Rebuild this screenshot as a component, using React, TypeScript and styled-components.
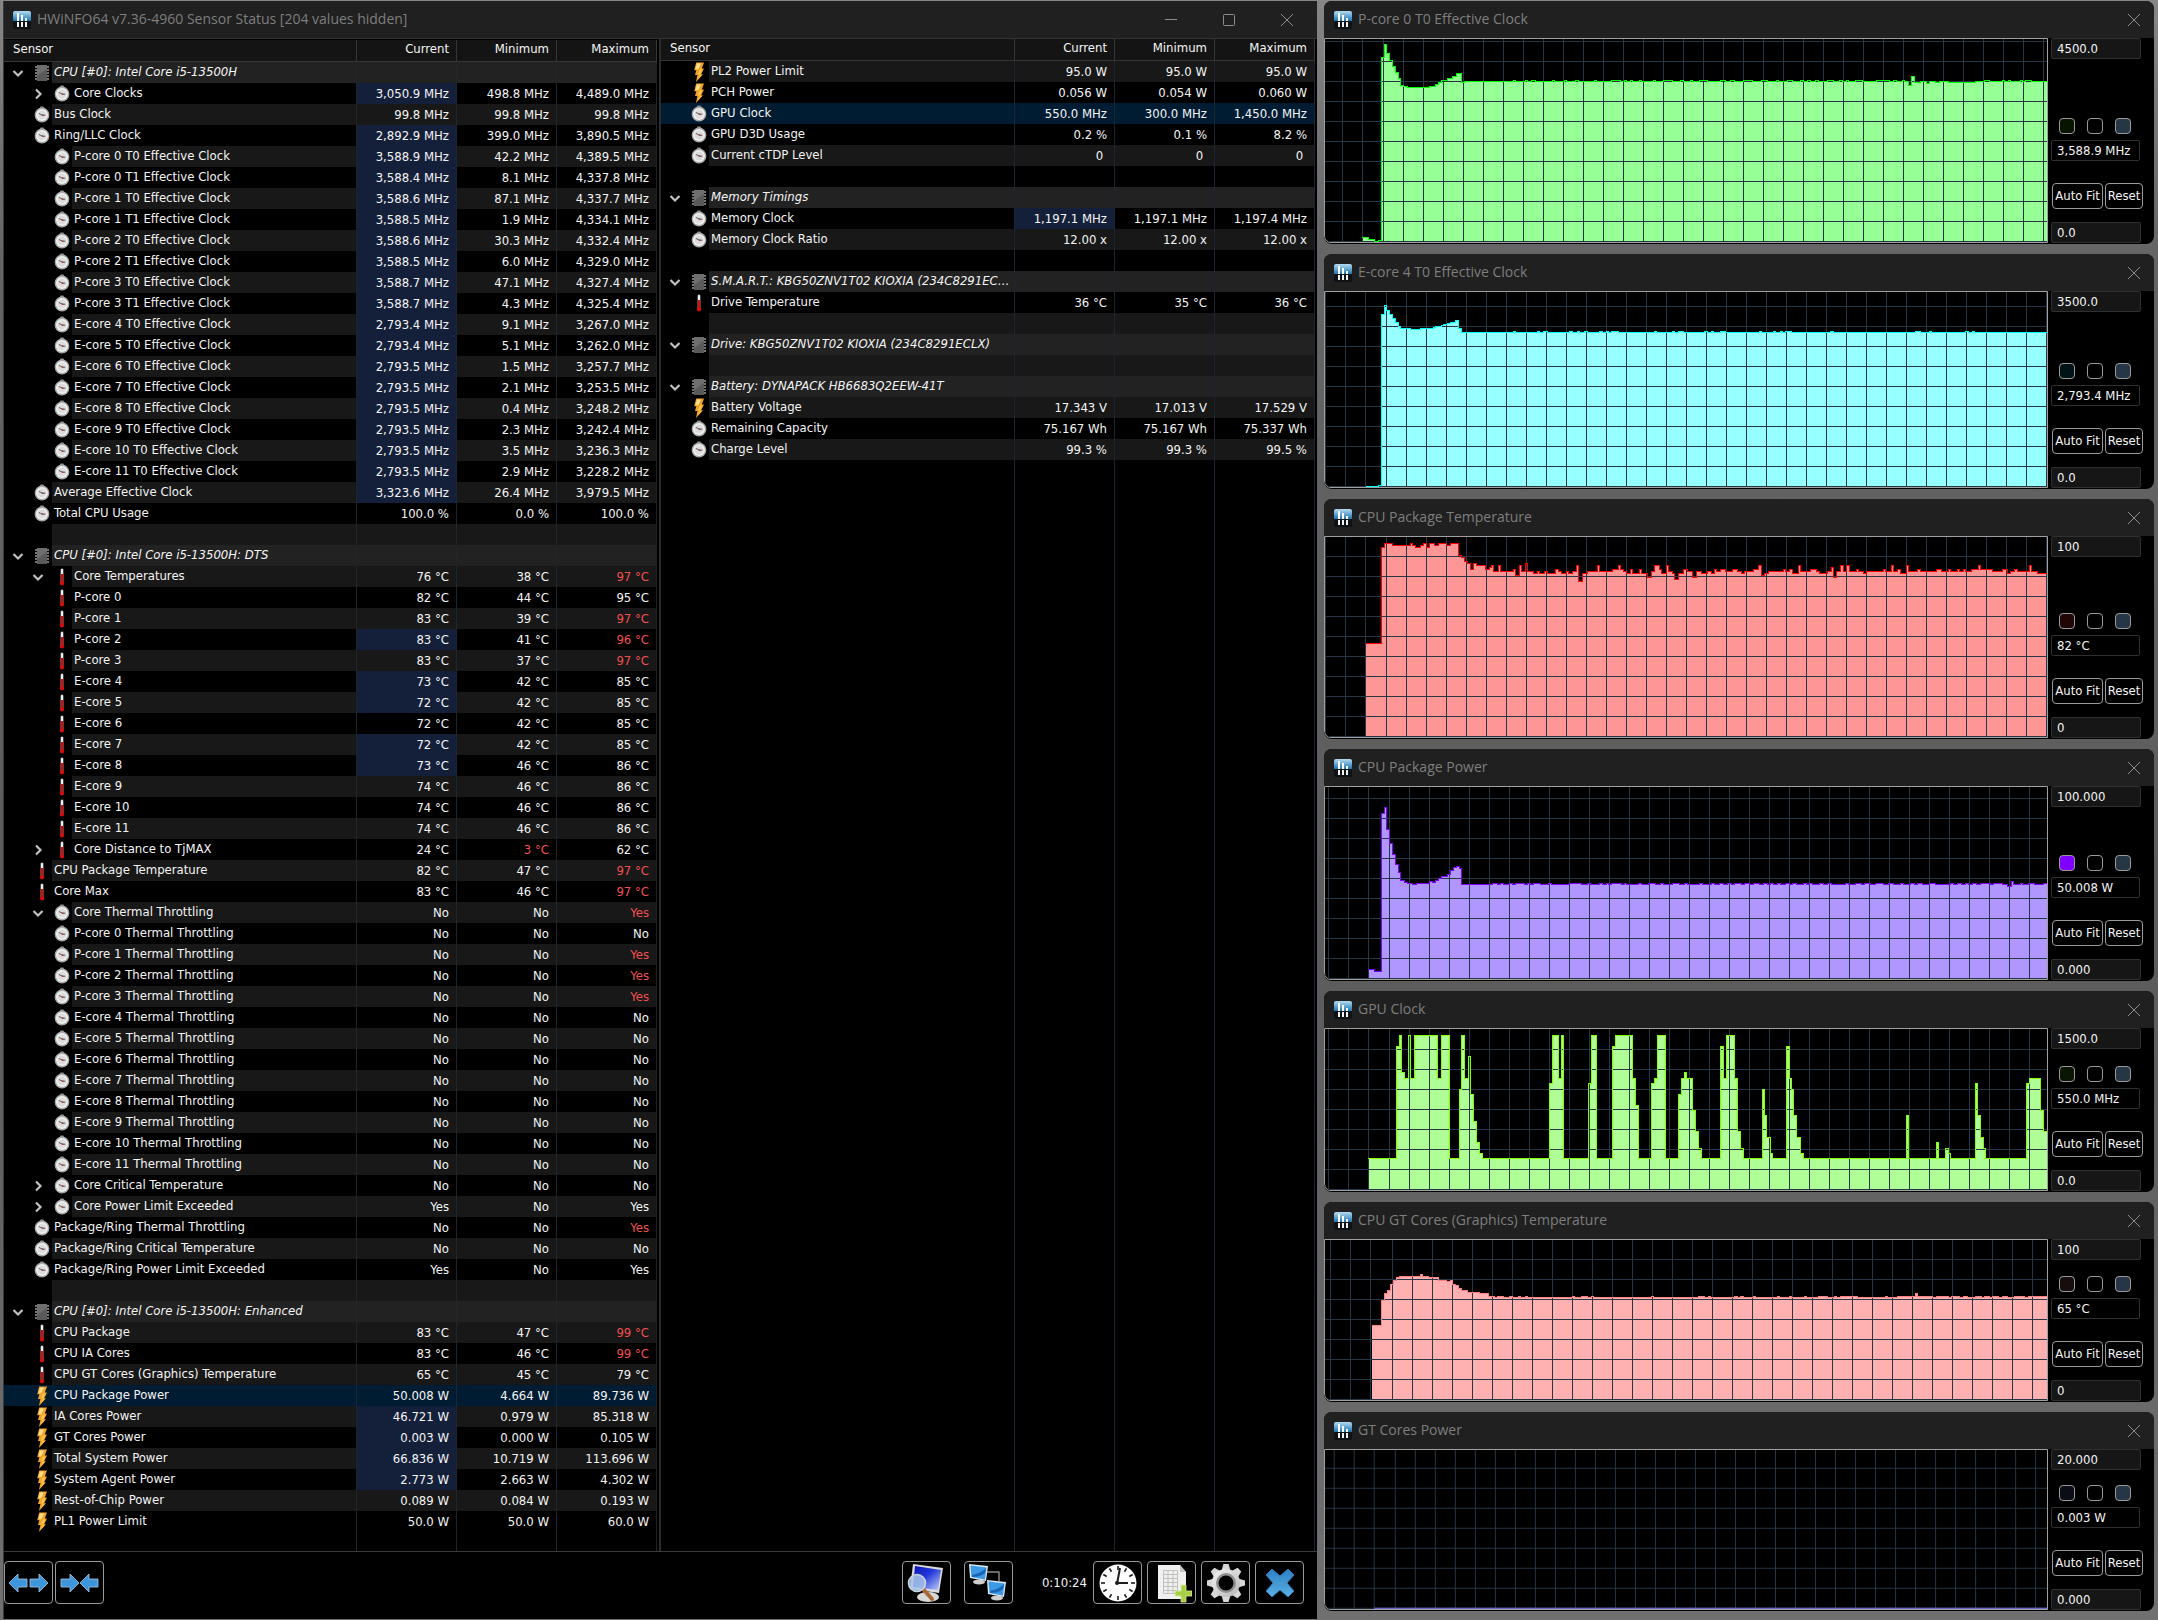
import React, { useState } from "react";
import styled, { createGlobalStyle, css } from "styled-components";

/* ---------- theme ---------- */

const tableFont = `"DejaVu Sans Condensed", "DejaVu Sans", "Noto Sans", sans-serif`;
const titleFont = `"Open Sans", "Noto Sans", sans-serif`;

const GlobalStyle = createGlobalStyle`
  *, *::before, *::after { box-sizing: border-box; }
  html, body { margin: 0; padding: 0; background: #5f5f5f; }
  body { font-family: ${tableFont}; font-size: 13px; line-height: 20px; color: #f4f4f4; }
  button, input { font: inherit; color: inherit; margin: 0; }
`;

/* ---------- layout ---------- */

const Desktop = styled.div`
  display: grid;
  grid-template-columns: minmax(0, 1314fr) minmax(0, 830fr);
  column-gap: 7px;
  align-items: start;
  min-height: 100vh;
  padding: 1px 4px 1px 3px;
  background: linear-gradient(#868686, #646464 260px, #5c5c5c 60%, #707070);
`;

const MainWindow = styled.main`
  display: flex;
  flex-direction: column;
  min-height: calc(100vh - 2px);
  border-left: 1px solid #3a3a3a;
  background: #000;
`;

const GraphColumn = styled.section`
  display: flex;
  flex-direction: column;
  gap: 10px;
`;

const TitleBar = styled.header<{ $main?: boolean }>`
  display: flex;
  align-items: center;
  height: 37px;
  padding: ${(p) => (p.$main ? "0 20px 0 9px" : "0 10px 0 10px")};
  background: #202020;
`;

const Title = styled.h1`
  flex: 1;
  min-width: 0;
  margin: 0 0 2px 6px;
  overflow: hidden;
  white-space: nowrap;
  color: #7e7e7e;
  font-family: ${titleFont};
  font-size: 14px;
  font-weight: 400;
  line-height: 20px;
`;

const WindowControls = styled.div`
  display: flex;
  gap: 38px;
`;

const ControlButton = styled.button`
  display: grid;
  place-items: center;
  width: 20px;
  height: 20px;
  padding: 0;
  border: 0;
  background: none;
  color: #8c8c8c;
`;

const Panes = styled.div`
  display: grid;
  flex: 1;
  grid-template-columns: minmax(0, 657fr) minmax(0, 656fr);
  border-top: 1px solid #343434;
`;

const Pane = styled.section<{ $divided?: boolean }>`
  display: grid;
  ${(p) =>
    p.$divided
      ? css`
          padding: 1px 2px 0 0;
          border-right: 2px solid #2c2c2c;
        `
      : css`
          padding-right: 2px;
        `}
`;

/* ---------- sensor table ---------- */

const Table = styled.table`
  width: 100%;
  height: 100%;
  table-layout: fixed;
  border-collapse: separate;
  border-spacing: 0;
`;

const ValueCol = styled.col`
  width: 100px;
`;

const HeadCell = styled.th<{ $name?: boolean }>`
  height: 22px;
  padding: ${(p) => (p.$name ? "0 0 3px 9px" : "0 7px 3px 0")};
  border-right: 1px solid #363636;
  border-bottom: 1px solid #363636;
  background: #141414;
  font-weight: 400;
  line-height: 18px;
  text-align: ${(p) => (p.$name ? "left" : "right")};
`;

type Tone = "plain" | "stripe" | "group" | "selected";

const toneColor: Record<Tone, string> = {
  plain: "#000",
  stripe: "#181818",
  group: "#222",
  selected: "#001c33",
};

const Row = styled.tr<{ $tone: Tone }>`
  height: 21px;
  background: ${(p) => toneColor[p.$tone]};
`;

const NameCell = styled.td`
  padding: 0;
  border-right: 1px solid #1c2630;
`;

const NameLine = styled.div`
  display: flex;
  height: 21px;
`;

const Gutter = styled.span<{ $depth: number; $selected: boolean }>`
  display: flex;
  flex: none;
  align-items: center;
  justify-content: flex-end;
  gap: 6px;
  width: ${(p) => 48 + p.$depth * 20}px;
  background: ${(p) => (p.$selected ? "transparent" : "#000")};
`;

const Expander = styled.button`
  display: grid;
  place-items: center;
  width: 16px;
  height: 20px;
  padding: 0;
  border: 0;
  background: none;
`;

const IconSlot = styled.span`
  display: grid;
  place-items: center;
  width: 20px;
  height: 21px;
`;

const Label = styled.span<{ $group: boolean }>`
  flex: 1;
  min-width: 0;
  padding-left: 2px;
  overflow: hidden;
  white-space: nowrap;
  text-overflow: ellipsis;
  font-style: ${(p) => (p.$group ? "italic" : "normal")};
`;

const ValueCell = styled.td<{ $changed?: boolean; $alert?: boolean }>`
  padding: 0 7px 0 0;
  border-right: 1px solid #1c2630;
  text-align: right;
  white-space: pre;
  ${(p) => p.$changed && "background: #14203a;"}
  ${(p) => p.$alert && "color: #f25050;"}
`;

const FillerRow = styled.tr`
  background: #000;
`;

/* ---------- toolbar ---------- */

const Toolbar = styled.footer`
  display: flex;
  align-items: center;
  justify-content: space-between;
  padding: 9px 13px 15px 0;
  border-top: 1px solid #3a3a3a;
`;

const ToolGroup = styled.div<{ $gap: number }>`
  display: flex;
  align-items: center;
  gap: ${(p) => p.$gap}px;
`;

const ToolButton = styled.button`
  display: grid;
  place-items: center;
  width: 49px;
  height: 43px;
  padding: 0;
  border: 1px solid #9a9a9a;
  border-radius: 4px;
  background: #000;
`;

const Elapsed = styled.time`
  margin: 0 1px 0 24px;
`;

/* ---------- graph windows ---------- */

const GraphFrame = styled.article<{ $height: number }>`
  display: flex;
  flex-direction: column;
  height: ${(p) => p.$height}px;
  overflow: hidden;
  border-radius: 8px;
  background: #000;
`;

const GraphBody = styled.div`
  display: flex;
  flex: 1;
  min-height: 0;
  padding-bottom: 1px;
`;

const Plot = styled.div`
  flex: 1;
  min-width: 0;
  border: 1px solid #a0a0a0;
  border-bottom-left-radius: 7px;
  overflow: hidden;
`;

const PlotSvg = styled.svg`
  display: block;
  width: 100%;
  height: 100%;
`;

const GraphSide = styled.div`
  display: flex;
  flex: none;
  flex-direction: column;
  align-items: flex-start;
  width: 106px;
  padding-left: 3px;
`;

const Field = styled.input<{ $role: "max" | "value" | "min" }>`
  width: ${(p) => (p.$role === "value" ? 89 : 90)}px;
  height: 21px;
  padding: 0 5px;
  border: 1px solid #303030;
  border-radius: 2px;
  outline: 0;
  background: ${(p) => (p.$role === "value" ? "#000" : "#161616")};
  ${(p) => p.$role === "max" && "margin-bottom: auto;"}
`;

const Swatches = styled.div`
  display: flex;
  gap: 12px;
  margin: 0 0 6px 8px;
`;

const Swatch = styled.button<{ $color: string }>`
  width: 16px;
  height: 16px;
  padding: 0;
  border: 1px solid #9a9a9a;
  border-radius: 4px;
  background: ${(p) => p.$color};
`;

const GraphButtons = styled.div`
  display: flex;
  gap: 2px;
  margin: 22px 0 13px 1px;
`;

const GraphButton = styled.button<{ $wide?: boolean }>`
  width: ${(p) => (p.$wide ? 51 : 38)}px;
  height: 26px;
  padding: 0;
  border: 1px solid #9a9a9a;
  border-radius: 4px;
  background: #000;
  white-space: nowrap;
`;

/* ---------- icons ---------- */

const AppIcon = () => (
  <svg width="18" height="18" viewBox="0 0 18 18" aria-hidden="true">
    <defs>
      <linearGradient id="appBlue" x1="0" y1="0" x2="0" y2="1">
        <stop offset="0" stopColor="#b4dcf2" />
        <stop offset="1" stopColor="#1c74b0" />
      </linearGradient>
    </defs>
    <rect width="18" height="18" rx="2" fill="#0d1216" />
    <path d="M2 0h14a2 2 0 0 1 2 2v8H0V2a2 2 0 0 1 2-2z" fill="url(#appBlue)" />
    <path d="M4 2h2v8H4zM8 4h2v6H8zM12 7h2v3h-2z" fill="#fff" />
    <path d="M4 11h2v5H4zM8 11h2v5H8zM12 11h2v5h-2z" fill="#f2f2f2" />
  </svg>
);

const CloseGlyph = () => (
  <svg width="14" height="14" viewBox="0 0 14 14" aria-hidden="true">
    <path d="M1 1l12 12M13 1L1 13" stroke="currentColor" fill="none" />
  </svg>
);

const MinimizeGlyph = () => (
  <svg width="14" height="14" viewBox="0 0 14 14" aria-hidden="true">
    <path d="M1 6.5h12" stroke="currentColor" fill="none" />
  </svg>
);

const MaximizeGlyph = () => (
  <svg width="14" height="14" viewBox="0 0 14 14" aria-hidden="true">
    <rect x="1.5" y="1.5" width="11" height="11" rx="1" stroke="currentColor" fill="none" />
  </svg>
);

const Chevron = ({ open }: { open: boolean }) => (
  <svg width="12" height="12" viewBox="0 0 12 12" aria-hidden="true">
    <path
      d={open ? "M1.5 4L6 8.5L10.5 4" : "M4 1.5L8.5 6L4 10.5"}
      stroke="#c2c2c2"
      strokeWidth="2.2"
      fill="none"
    />
  </svg>
);

const ChipIcon = () => (
  <svg width="16" height="18" viewBox="0 0 16 18" aria-hidden="true">
    <path d="M1 3h14M1 6h14M1 9h14M1 12h14M1 15h14" stroke="#9c9c9c" strokeWidth="1.4" />
    <rect x="3" y="1" width="10" height="16" fill="#5a5a5a" />
    <path d="M3 1h10v4L3 12z" fill="#6e6e6e" />
  </svg>
);

const DialIcon = () => (
  <svg width="16" height="18" viewBox="0 0 16 18" aria-hidden="true">
    <rect x="6" y="0.5" width="4" height="2" rx="1" fill="#8a8a8a" />
    <circle cx="8" cy="9" r="7.4" fill="#a8a8a8" />
    <circle cx="8" cy="9" r="6" fill="#f0f0f0" />
    <circle cx="8" cy="9" r="4.4" fill="#dcdcdc" />
    <path d="M4.8 7.4L8.4 9.2L11.4 9.2" stroke="#5a5a5a" fill="none" />
    <circle cx="8.6" cy="9.2" r="0.9" fill="#a8443a" />
  </svg>
);

const ThermoIcon = () => (
  <svg width="6" height="18" viewBox="0 0 6 18" aria-hidden="true">
    <rect x="1.5" y="0.5" width="3" height="15" rx="1.4" fill="#8e8e8e" />
    <rect x="2" y="1" width="2" height="6" rx="0.8" fill="#f0f0f0" />
    <rect x="1.8" y="6" width="2.4" height="9" fill="#cf1010" />
    <circle cx="3" cy="15.4" r="2.1" fill="#d80c0c" />
  </svg>
);

const BoltIcon = () => (
  <svg width="12" height="20" viewBox="0 0 12 20" aria-hidden="true">
    <path d="M3.2 0.5H11L8.8 6.6H11L8.2 12.2H10L3 20L4.4 13H2L3.4 8.2H1.2z" fill="#f3a32a" />
    <path d="M4 1.4H8L5.2 7.2H2.4z" fill="#ffe08a" />
    <path d="M6.8 7.4L5 12.6H7L5 17.4L8.6 13H6.8L9.4 7.4z" fill="#ffc648" />
  </svg>
);

const arrowRight = "M0 6h9V1l9 9-9 9v-5H0z";

const ExpandArrows = () => (
  <svg width="41" height="20" viewBox="0 0 41 20" aria-hidden="true">
    <g fill="#3d95dc" stroke="#a9c6dd" strokeWidth="0.8">
      <path d={arrowRight} transform="matrix(-1 0 0 1 19 0)" />
      <path d={arrowRight} transform="translate(22 0)" />
    </g>
  </svg>
);

const CollapseArrows = () => (
  <svg width="41" height="20" viewBox="0 0 41 20" aria-hidden="true">
    <g fill="#3d95dc" stroke="#a9c6dd" strokeWidth="0.8">
      <path d={arrowRight} transform="translate(2 0)" />
      <path d={arrowRight} transform="matrix(-1 0 0 1 39 0)" />
    </g>
  </svg>
);

const MonitorSearchIcon = () => (
  <svg width="40" height="40" viewBox="0 0 40 40" aria-hidden="true">
    <defs>
      <linearGradient id="screenBlue" x1="0" y1="0" x2="1" y2="1">
        <stop offset="0" stopColor="#0a12b4" />
        <stop offset="0.45" stopColor="#2238d8" />
        <stop offset="1" stopColor="#c4d2fa" />
      </linearGradient>
    </defs>
    <ellipse cx="22" cy="34" rx="11" ry="5" fill="#d8d8d8" />
    <path d="M7 1l30 4-4 25-29-4z" fill="#dadada" />
    <path d="M9 3l26 4-3 20-25-3z" fill="url(#screenBlue)" />
    <path d="M17 26l9 10" stroke="#a8693a" strokeWidth="4" strokeLinecap="round" />
    <circle cx="11" cy="20" r="8.5" fill="#a9c4ea" fillOpacity="0.85" stroke="#c9d3de" strokeWidth="1.6" />
  </svg>
);

const RemoteScreen = ({ x, y }: { x: number; y: number }) => (
  <g transform={`translate(${x} ${y})`}>
    <ellipse cx="10" cy="18" rx="6" ry="2.4" fill="#cfcfcf" />
    <path d="M0 0l19 2-2 15L1 14z" fill="#dce6ee" />
    <path d="M1.5 1.5l16 2-1.6 12L2.5 13z" fill="#3a9ae6" />
    <path d="M3 11c5-1 10-3 14-7l-1 5c-4 3-8 4-13 4z" fill="#1b64b4" />
  </g>
);

const NetworkIcon = () => (
  <svg width="40" height="40" viewBox="0 0 40 40" aria-hidden="true">
    <path d="M18 9h13v9" stroke="#8c8c8c" strokeWidth="1.4" fill="none" />
    <RemoteScreen x={1} y={1} />
    <RemoteScreen x={19} y={17} />
  </svg>
);

const ClockIcon = () => (
  <svg width="38" height="38" viewBox="0 0 38 38" aria-hidden="true">
    <circle cx="19" cy="19" r="18.5" fill="#fdfdfd" />
    {Array.from({ length: 12 }, (_, i) => (
      <path key={i} d="M19 2v4" stroke="#1c1c1c" strokeWidth="1.6" transform={`rotate(${i * 30} 19 19)`} />
    ))}
    <path d="M18 20L21 4M18 19h11" stroke="#1c1c1c" strokeWidth="2" fill="none" />
    <circle cx="18" cy="19" r="2" fill="#1c1c1c" />
  </svg>
);

const LogFileIcon = () => (
  <svg width="40" height="40" viewBox="0 0 40 40" aria-hidden="true">
    <path d="M6 2h22l6 7v27H6z" fill="#f0f0ee" />
    <path d="M28 2v7h6z" fill="#c4c4c4" />
    <path
      d="M11.5 7.5h14v23h-14zM11.5 11.5h14M11.5 15.5h14M11.5 19.5h14M11.5 23.5h14M11.5 27.5h14M16 7.5v23M21 7.5v23"
      stroke="#c0c0c0"
      fill="none"
    />
    <path d="M29 22h5v6h6v5h-6v6h-5v-6h-6v-5h6z" fill="#a8d046" stroke="#d8eca0" strokeWidth="0.8" />
  </svg>
);

const GearIcon = () => (
  <svg width="40" height="40" viewBox="0 0 40 40" aria-hidden="true">
    <defs>
      <linearGradient id="gearSteel" x1="0" y1="0" x2="1" y2="1">
        <stop offset="0" stopColor="#f4f4f4" />
        <stop offset="1" stopColor="#b4b4b4" />
      </linearGradient>
    </defs>
    <g fill="#d8d8d8">
      {Array.from({ length: 8 }, (_, i) => (
        <path key={i} d="M17.4 1h5.2l2.2 8h-9.6z" transform={`rotate(${i * 45} 20 20)`} />
      ))}
    </g>
    <circle cx="20" cy="20" r="14" fill="url(#gearSteel)" />
    <circle cx="20" cy="20" r="10" fill="#8f8f8f" />
    <circle cx="20" cy="20" r="7.5" fill="#000" />
  </svg>
);

const CrossIcon = () => (
  <svg width="30" height="30" viewBox="0 0 30 30" aria-hidden="true">
    <defs>
      <linearGradient id="crossBlue" x1="0" y1="0" x2="0" y2="1">
        <stop offset="0" stopColor="#2c80c4" />
        <stop offset="1" stopColor="#5cb0e4" />
      </linearGradient>
    </defs>
    <path
      d="M7 1l8 7 8-7 6 6-7 8 7 8-6 6-8-7-8 7-6-6 7-8-7-8z"
      fill="url(#crossBlue)"
      stroke="#2f78b4"
    />
  </svg>
);

/* ---------- sensor data ---------- */

type IconKind = "chip" | "dial" | "thermo" | "bolt";

interface Sensor {
  name: string;
  icon?: IconKind;
  depth: number;
  expander?: "open" | "closed";
  values: [string, string, string];
  changed: boolean;
  alerts: boolean[];
  selected: boolean;
}

const none: [string, string, string] = ["", "", ""];

const group = (name: string): Sensor => ({
  name, icon: "chip", depth: 0, expander: "open", values: none, changed: false, alerts: [], selected: false,
});

const spacer: Sensor = { name: "", depth: 0, values: none, changed: false, alerts: [], selected: false };

/* flags: d = nested, o/c = open/closed expander, * = value just changed, s = selected,
   trailing "!" on a value = outside of its limit */
const sensor = (icon: IconKind, flags: string, name: string, row: string): Sensor => {
  const cells = row.split("|");
  return {
    name,
    icon,
    depth: flags.includes("d") ? 1 : 0,
    expander: flags.includes("o") ? "open" : flags.includes("c") ? "closed" : undefined,
    values: cells.map((v) => v.replace("!", "")) as [string, string, string],
    changed: flags.includes("*"),
    alerts: cells.map((v) => v.endsWith("!")),
    selected: flags.includes("s"),
  };
};

const withUnit = (row: string, unit: string) =>
  row
    .split(" ")
    .map((v) => (v.endsWith("!") ? `${v.slice(0, -1)} ${unit}!` : `${v} ${unit}`))
    .join("|");

const mhz = (flags: string, name: string, row: string) => sensor("dial", flags, name, withUnit(row, "MHz"));
const temp = (flags: string, name: string, row: string) => sensor("thermo", flags, name, withUnit(row, "°C"));
const watt = (flags: string, name: string, row: string) => sensor("bolt", flags, name, withUnit(row, "W"));
const flag = (flags: string, name: string, row: string) => sensor("dial", flags, name, row.split(" ").join("|"));

const leftSensors: Sensor[] = [
  group("CPU [#0]: Intel Core i5-13500H"),
  mhz("dc*", "Core Clocks", "3,050.9 498.8 4,489.0"),
  mhz("", "Bus Clock", "99.8 99.8 99.8"),
  mhz("*", "Ring/LLC Clock", "2,892.9 399.0 3,890.5"),
  mhz("d*", "P-core 0 T0 Effective Clock", "3,588.9 42.2 4,389.5"),
  mhz("d*", "P-core 0 T1 Effective Clock", "3,588.4 8.1 4,337.8"),
  mhz("d*", "P-core 1 T0 Effective Clock", "3,588.6 87.1 4,337.7"),
  mhz("d*", "P-core 1 T1 Effective Clock", "3,588.5 1.9 4,334.1"),
  mhz("d*", "P-core 2 T0 Effective Clock", "3,588.6 30.3 4,332.4"),
  mhz("d*", "P-core 2 T1 Effective Clock", "3,588.5 6.0 4,329.0"),
  mhz("d*", "P-core 3 T0 Effective Clock", "3,588.7 47.1 4,327.4"),
  mhz("d*", "P-core 3 T1 Effective Clock", "3,588.7 4.3 4,325.4"),
  mhz("d*", "E-core 4 T0 Effective Clock", "2,793.4 9.1 3,267.0"),
  mhz("d*", "E-core 5 T0 Effective Clock", "2,793.4 5.1 3,262.0"),
  mhz("d*", "E-core 6 T0 Effective Clock", "2,793.5 1.5 3,257.7"),
  mhz("d*", "E-core 7 T0 Effective Clock", "2,793.5 2.1 3,253.5"),
  mhz("d*", "E-core 8 T0 Effective Clock", "2,793.5 0.4 3,248.2"),
  mhz("d*", "E-core 9 T0 Effective Clock", "2,793.5 2.3 3,242.4"),
  mhz("d*", "E-core 10 T0 Effective Clock", "2,793.5 3.5 3,236.3"),
  mhz("d*", "E-core 11 T0 Effective Clock", "2,793.5 2.9 3,228.2"),
  mhz("*", "Average Effective Clock", "3,323.6 26.4 3,979.5"),
  sensor("dial", "", "Total CPU Usage", "100.0 %|0.0 %|100.0 %"),
  spacer,
  group("CPU [#0]: Intel Core i5-13500H: DTS"),
  temp("do", "Core Temperatures", "76 38 97!"),
  temp("d", "P-core 0", "82 44 95"),
  temp("d", "P-core 1", "83 39 97!"),
  temp("d*", "P-core 2", "83 41 96!"),
  temp("d", "P-core 3", "83 37 97!"),
  temp("d*", "E-core 4", "73 42 85"),
  temp("d*", "E-core 5", "72 42 85"),
  temp("d", "E-core 6", "72 42 85"),
  temp("d*", "E-core 7", "72 42 85"),
  temp("d*", "E-core 8", "73 46 86"),
  temp("d", "E-core 9", "74 46 86"),
  temp("d", "E-core 10", "74 46 86"),
  temp("d", "E-core 11", "74 46 86"),
  temp("dc", "Core Distance to TjMAX", "24 3! 62"),
  temp("", "CPU Package Temperature", "82 47 97!"),
  temp("", "Core Max", "83 46 97!"),
  flag("do", "Core Thermal Throttling", "No No Yes!"),
  flag("d", "P-core 0 Thermal Throttling", "No No No"),
  flag("d", "P-core 1 Thermal Throttling", "No No Yes!"),
  flag("d", "P-core 2 Thermal Throttling", "No No Yes!"),
  flag("d", "P-core 3 Thermal Throttling", "No No Yes!"),
  ...[4, 5, 6, 7, 8, 9, 10, 11].map((n) => flag("d", `E-core ${n} Thermal Throttling`, "No No No")),
  flag("dc", "Core Critical Temperature", "No No No"),
  flag("dc", "Core Power Limit Exceeded", "Yes No Yes"),
  flag("", "Package/Ring Thermal Throttling", "No No Yes!"),
  flag("", "Package/Ring Critical Temperature", "No No No"),
  flag("", "Package/Ring Power Limit Exceeded", "Yes No Yes"),
  spacer,
  group("CPU [#0]: Intel Core i5-13500H: Enhanced"),
  temp("", "CPU Package", "83 47 99!"),
  temp("", "CPU IA Cores", "83 46 99!"),
  temp("", "CPU GT Cores (Graphics) Temperature", "65 45 79"),
  watt("s", "CPU Package Power", "50.008 4.664 89.736"),
  watt("*", "IA Cores Power", "46.721 0.979 85.318"),
  watt("*", "GT Cores Power", "0.003 0.000 0.105"),
  watt("*", "Total System Power", "66.836 10.719 113.696"),
  watt("*", "System Agent Power", "2.773 2.663 4.302"),
  watt("", "Rest-of-Chip Power", "0.089 0.084 0.193"),
  watt("", "PL1 Power Limit", "50.0 50.0 60.0"),
];

const rightSensors: Sensor[] = [
  watt("", "PL2 Power Limit", "95.0 95.0 95.0"),
  watt("", "PCH Power", "0.056 0.054 0.060"),
  mhz("s", "GPU Clock", "550.0 300.0 1,450.0"),
  sensor("dial", "", "GPU D3D Usage", "0.2 %|0.1 %|8.2 %"),
  sensor("dial", "", "Current cTDP Level", "0 |0 |0 "),
  spacer,
  group("Memory Timings"),
  mhz("*", "Memory Clock", "1,197.1 1,197.1 1,197.4"),
  sensor("dial", "", "Memory Clock Ratio", "12.00 x|12.00 x|12.00 x"),
  spacer,
  group("S.M.A.R.T.: KBG50ZNV1T02 KIOXIA (234C8291ECLX)"),
  temp("", "Drive Temperature", "36 35 36"),
  spacer,
  group("Drive: KBG50ZNV1T02 KIOXIA (234C8291ECLX)"),
  spacer,
  group("Battery: DYNAPACK HB6683Q2EEW-41T"),
  sensor("bolt", "", "Battery Voltage", "17.343 V|17.013 V|17.529 V"),
  sensor("dial", "", "Remaining Capacity", "75.167 Wh|75.167 Wh|75.337 Wh"),
  sensor("dial", "", "Charge Level", "99.3 %|99.3 %|99.5 %"),
];

const icons: Record<IconKind, () => React.ReactElement> = {
  chip: ChipIcon,
  dial: DialIcon,
  thermo: ThermoIcon,
  bolt: BoltIcon,
};

const toneOf = (s: Sensor, index: number): Tone =>
  s.selected ? "selected" : s.icon === "chip" ? "group" : index % 2 === 0 ? "stripe" : "plain";

function SensorRow({ item, index }: { item: Sensor; index: number }) {
  const Icon = item.icon ? icons[item.icon] : null;
  return (
    <Row $tone={toneOf(item, index)}>
      <NameCell>
        <NameLine>
          <Gutter $depth={item.depth} $selected={item.selected}>
            {item.expander && (
              <Expander type="button" aria-label={`Toggle ${item.name}`}>
                <Chevron open={item.expander === "open"} />
              </Expander>
            )}
            <IconSlot>{Icon && <Icon />}</IconSlot>
          </Gutter>
          <Label $group={item.icon === "chip"}>{item.name}</Label>
        </NameLine>
      </NameCell>
      {item.values.map((value, i) => (
        <ValueCell key={i} $changed={item.changed && i === 0} $alert={item.alerts[i]}>
          {value}
        </ValueCell>
      ))}
    </Row>
  );
}

function SensorTable({ items }: { items: Sensor[] }) {
  return (
    <Table>
      <colgroup>
        <col />
        <ValueCol />
        <ValueCol />
        <ValueCol />
      </colgroup>
      <thead>
        <tr>
          <HeadCell $name scope="col">Sensor</HeadCell>
          <HeadCell scope="col">Current</HeadCell>
          <HeadCell scope="col">Minimum</HeadCell>
          <HeadCell scope="col">Maximum</HeadCell>
        </tr>
      </thead>
      <tbody>
        {items.map((item, i) => (
          <SensorRow key={i} item={item} index={i} />
        ))}
        <FillerRow>
          <NameCell />
          <ValueCell />
          <ValueCell />
          <ValueCell />
        </FillerRow>
      </tbody>
    </Table>
  );
}

/* ---------- graph data ---------- */

/* A trace is a flat list of x, level pairs; each level holds until the next x. */
type Trace = number[];

/* Alternates between a resting level and a raised one over the given x ranges. */
const ripple = (rest: number, raised: number, ranges: number[]): Trace =>
  ranges.flatMap((x, i) => [x, i % 2 === 0 ? raised : rest]);

interface Graph {
  title: string;
  height: number;
  top: string;
  bottom: string;
  current: string;
  line: string;
  fill: string;
  swatch: string;
  view: [number, number];
  gridX: number;
  gridY: number;
  trace: Trace;
}

const X_START = 28;
const X_END = 1363;
const GRID_STEP_X = 37;

const graphs: Graph[] = [
  {
    title: "P-core 0 T0 Effective Clock",
    height: 243, top: "4500.0", bottom: "0.0", current: "3,588.9 MHz",
    line: "#00ff00", fill: "#96ff96", swatch: "#061400",
    view: [117, 609], gridX: 136, gridY: 60,
    trace: [
      97, 713, 108, 718, 119, 723, 127, 720, 133, 172, 138, 133, 141, 160, 147, 181, 152, 199, 158, 217,
      163, 235, 168, 256, 174, 259, 180, 262, 222, 259, 232, 253, 238, 247, 244, 241, 254, 235, 264, 230,
      272, 220, 280, 247, 286, 244,
      ...ripple(244, 241, [
        376, 380, 398, 402, 409, 417, 448, 452, 470, 474, 492, 496, 526, 530, 558, 574, 581, 585, 592, 596,
        609, 613, 636, 640, 654, 670, 686, 690, 703, 707, 720, 736, 760, 768, 777, 785, 802, 818, 836, 846,
        862, 866, 884, 892, 908, 912, 920, 926, 935, 941, 958, 968, 980, 984, 992, 996, 1008, 1022, 1048,
        1072, 1080, 1084, 1096, 1100,
      ]),
      1106, 256, 1113, 229, 1118, 247, 1130, 244, 1140, 250, 1146, 244, 1156, 247, 1164, 244, 1180, 247,
      1230, 244,
      ...ripple(244, 241, [1247, 1256, 1281, 1285, 1291, 1295, 1314, 1318, 1324, 1334]),
    ],
  },
  {
    title: "E-core 4 T0 Effective Clock",
    height: 235, top: "3500.0", bottom: "0.0", current: "2,793.4 MHz",
    line: "#00ffff", fill: "#96ffff", swatch: "#001418",
    view: [876, 585], gridX: 141, gridY: 60,
    trace: [
      103, 1458, 127, 1455, 133, 943, 138, 916, 141, 931, 147, 943, 152, 955, 158, 967, 163, 979, 168, 985,
      186, 988, 204, 985, 228, 982, 233, 979, 243, 976, 248, 973, 254, 970, 260, 967, 270, 961, 275, 985,
      280, 997,
      ...ripple(997, 994, [
        376, 380, 420, 424, 432, 440, 480, 486, 494, 498, 508, 514, 536, 542, 548, 552, 558, 570, 637, 641,
        670, 675, 682, 691, 730, 735, 742, 746, 759, 768, 831, 835, 857, 861, 870, 874, 880, 890, 963, 968,
        1119, 1130, 1146, 1150, 1213, 1218, 1225, 1229,
      ]),
    ],
  },
  {
    title: "CPU Package Temperature",
    height: 240, top: "100", bottom: "0", current: "82 °C",
    line: "#ff0000", fill: "#ff9696", swatch: "#200606",
    view: [141, 600], gridX: 141, gridY: 60,
    trace: [
      103, 460, 133, 172, 138, 160, 153, 166, 187, 160, 190, 166, 196, 172, 204, 166, 210, 160, 215, 172,
      221, 160, 231, 166, 237, 160, 253, 166, 260, 160, 275, 196, 280, 202, 286, 214, 291, 220, 297, 238,
      303, 220, 308, 226, 325, 238, 332, 232, 336, 226, 340, 244, 348, 226, 353, 244, 377, 238, 380, 256,
      387, 226, 391, 244, 398, 220, 402, 244, 413, 250, 421, 244, 424, 250, 434, 244, 439, 250, 455, 238,
      459, 244, 466, 250, 474, 244, 478, 250, 486, 244, 493, 226, 497, 274, 504, 250, 514, 244, 532, 226,
      536, 244, 559, 238, 571, 226, 575, 238, 580, 244, 586, 250, 593, 238, 597, 250, 609, 238, 613, 250,
      625, 262, 631, 244, 638, 226, 646, 238, 650, 250, 659, 226, 663, 244, 670, 250, 675, 268, 681, 250,
      691, 238, 698, 244, 708, 262, 714, 244, 724, 250, 736, 244, 742, 250, 748, 238, 752, 244, 759, 238,
      768, 244, 782, 238, 790, 244, 798, 250, 803, 244, 820, 238, 830, 226, 835, 256, 841, 250, 848, 244,
      876, 238, 880, 244, 886, 238, 892, 250, 903, 226, 907, 244, 926, 238, 936, 244, 942, 250, 958, 244,
      964, 232, 968, 262, 974, 244, 982, 226, 986, 244, 992, 226, 997, 244, 1010, 238, 1014, 244, 1024, 250,
      1030, 244, 1060, 238, 1064, 244, 1075, 226, 1079, 244, 1087, 238, 1092, 250, 1103, 226, 1107, 244,
      1124, 238, 1130, 244, 1158, 238, 1168, 244, 1180, 238, 1184, 244, 1198, 238, 1202, 244, 1208, 238,
      1212, 244, 1224, 238, 1236, 226, 1240, 238, 1262, 244, 1280, 238, 1290, 250, 1296, 244, 1303, 238,
      1308, 244, 1330, 226, 1334, 244, 1345, 250,
    ],
  },
  {
    title: "CPU Package Power",
    height: 232, top: "100.000", bottom: "0.000", current: "50.008 W",
    line: "#8000ff", fill: "#b096ff", swatch: "#8000ff",
    view: [891, 576], gridX: 147, gridY: 60,
    trace: [
      108, 1438, 119, 1444, 133, 970, 138, 952, 141, 1018, 147, 1060, 152, 1093, 158, 1123, 163, 1147, 168,
      1171, 175, 1176, 180, 1180, 190, 1183, 197, 1180, 221, 1174, 227, 1178, 232, 1171, 238, 1165, 243,
      1160, 254, 1152, 260, 1141, 265, 1133, 271, 1129, 276, 1135, 280, 1183,
      ...ripple(1183, 1180, [
        337, 347, 353, 358, 370, 374, 380, 396, 403, 408, 414, 426, 442, 446, 480, 502, 514, 518, 536, 542,
        548, 552, 558, 576, 581, 586, 608, 614, 626, 640, 648, 653, 670, 684, 692, 698, 720, 726, 742, 748,
        758, 764, 772, 780, 786, 798, 804, 812, 820, 832, 838, 846, 852, 858, 864, 870, 880, 886, 892, 900,
        912, 918, 924, 930, 942, 950, 958, 964, 990, 996, 1008, 1020, 1026, 1036, 1046, 1060, 1070, 1080,
        1092, 1098, 1110, 1118, 1124, 1132, 1146, 1156, 1184, 1190, 1198, 1204, 1212, 1218, 1226, 1232,
        1240, 1258, 1264, 1280,
      ]),
      1290, 1189, 1297, 1174, 1301, 1183,
      ...ripple(1183, 1180, [1314, 1318, 1328, 1340, 1357, 1363]),
    ],
  },
  {
    title: "GPU Clock",
    height: 201, top: "1500.0", bottom: "0.0", current: "550.0 MHz",
    line: "#80ff00", fill: "#b0ff96", swatch: "#0a1603",
    view: [120, 394], gridX: 147, gridY: 49,
    trace: [
      108, 437, 160, 163, 165, 136, 169, 226, 175, 240, 182, 136, 186, 240, 193, 136, 236, 240, 243, 136,
      258, 437, 277, 267, 281, 136, 286, 240, 293, 187, 297, 280, 303, 346, 308, 398, 314, 424, 319, 437,
      443, 253, 448, 136, 459, 240, 465, 136, 469, 437, 515, 253, 521, 136, 530, 437, 559, 163, 565, 136,
      596, 240, 602, 307, 607, 437, 632, 253, 637, 240, 643, 136, 657, 437, 681, 280, 687, 240, 693, 226,
      697, 240, 707, 319, 713, 371, 718, 413, 724, 437, 759, 163, 764, 240, 770, 136, 786, 240, 790, 371,
      796, 413, 801, 437, 837, 267, 840, 331, 845, 386, 851, 424, 856, 437, 881, 163, 886, 240, 890, 267,
      895, 331, 900, 386, 907, 424, 912, 437, 1103, 331, 1107, 437, 1158, 398, 1162, 437, 1175, 413, 1180,
      424, 1184, 437, 1230, 253, 1234, 331, 1240, 386, 1245, 413, 1250, 437, 1325, 253, 1330, 240, 1351,
      319, 1356, 371,
    ],
  },
  {
    title: "CPU GT Cores (Graphics) Temperature",
    height: 200, top: "100", bottom: "0", current: "65 °C",
    line: "#ff8080", fill: "#ffb0b0", swatch: "#160e0c",
    view: [637, 392], gridX: 152, gridY: 49,
    trace: [
      115, 846, 132, 785, 138, 767, 143, 760, 149, 745, 154, 736, 160, 729, 165, 726, 204, 721, 208, 726,
      220, 729, 237, 736, 253, 739, 260, 736, 263, 745, 270, 749, 275, 755, 281, 760, 291, 765, 314, 768,
      330, 775, 341, 779,
      ...ripple(779, 775, [
        347, 358, 370, 374, 386, 390, 398, 402, 486, 490, 503, 513, 520, 524, 631, 635, 719, 730, 737, 741,
        786, 790, 797, 801, 820, 824, 864, 868, 886, 890, 914, 918, 941, 957, 970, 974, 981, 1012, 1064,
        1068,
      ]),
      1086, 775, 1119, 768, 1123, 775, 1151, 779,
      ...ripple(779, 775, [
        1158, 1180, 1186, 1201, 1208, 1216, 1230, 1241, 1247, 1256, 1263, 1273, 1280, 1290, 1302, 1322,
        1329, 1363,
      ]),
    ],
  },
  {
    title: "GT Cores Power",
    height: 199, top: "20.000", bottom: "0.000", current: "0.003 W",
    line: "#8080ff", fill: "#000000", swatch: "#0a0c16",
    view: [1152, 390], gridX: 158, gridY: 49,
    trace: [119, 1540],
  },
];

const outlineOf = (trace: Trace) => {
  let d = `M${trace[0]} ${trace[1]}`;
  for (let i = 2; i < trace.length; i += 2) d += `H${trace[i]}V${trace[i + 1]}`;
  return `${d}H${X_END}`;
};

function gridOf({ gridX, gridY, view: [y0, h] }: Graph) {
  let d = "";
  for (let x = gridX; x < X_END; x += GRID_STEP_X) d += `M${x} ${y0}v${h}`;
  for (let x = gridX - GRID_STEP_X - 2; x >= X_START; x -= GRID_STEP_X) d += `M${x} ${y0}v${h}`;
  for (let y = y0 + h - 2; y > y0; y -= gridY) d += `M${X_START} ${y}H${X_END}`;
  return d;
}

function GraphPlot({ graph }: { graph: Graph }) {
  const [y0, h] = graph.view;
  const outline = outlineOf(graph.trace);
  return (
    <Plot>
      <PlotSvg
        role="img"
        aria-label={graph.title}
        viewBox={`${X_START} ${y0} ${X_END - X_START} ${h}`}
        preserveAspectRatio="none"
        shapeRendering="crispEdges"
      >
        <path d={`${outline}V${y0 + h}H${graph.trace[0]}Z`} fill={graph.fill} />
        <path d={gridOf(graph)} stroke="#263644" fill="none" vectorEffect="non-scaling-stroke" />
        <path d={outline} stroke={graph.line} fill="none" vectorEffect="non-scaling-stroke" />
      </PlotSvg>
    </Plot>
  );
}

function GraphWindow({ graph }: { graph: Graph }) {
  const [top, setTop] = useState(graph.top);
  const [bottom, setBottom] = useState(graph.bottom);
  return (
    <GraphFrame $height={graph.height}>
      <TitleBar>
        <AppIcon />
        <Title as="h2">{graph.title}</Title>
        <ControlButton type="button" aria-label={`Close ${graph.title}`}>
          <CloseGlyph />
        </ControlButton>
      </TitleBar>
      <GraphBody>
        <GraphPlot graph={graph} />
        <GraphSide>
          <Field $role="max" aria-label="Scale maximum" value={top} onChange={(e) => setTop(e.target.value)} />
          <Swatches>
            <Swatch type="button" $color={graph.swatch} aria-label="Line colour" />
            <Swatch type="button" $color="#000" aria-label="Background colour" />
            <Swatch type="button" $color="#263644" aria-label="Grid colour" />
          </Swatches>
          <Field $role="value" aria-label="Current value" value={graph.current} readOnly />
          <GraphButtons>
            <GraphButton type="button" $wide>Auto Fit</GraphButton>
            <GraphButton type="button">Reset</GraphButton>
          </GraphButtons>
          <Field $role="min" aria-label="Scale minimum" value={bottom} onChange={(e) => setBottom(e.target.value)} />
        </GraphSide>
      </GraphBody>
    </GraphFrame>
  );
}

/* ---------- app ---------- */

export default function App() {
  return (
    <>
      <GlobalStyle />
      <Desktop>
        <MainWindow>
          <TitleBar $main>
            <AppIcon />
            <Title>HWiNFO64 v7.36-4960 Sensor Status [204 values hidden]</Title>
            <WindowControls>
              <ControlButton type="button" aria-label="Minimize"><MinimizeGlyph /></ControlButton>
              <ControlButton type="button" aria-label="Maximize"><MaximizeGlyph /></ControlButton>
              <ControlButton type="button" aria-label="Close"><CloseGlyph /></ControlButton>
            </WindowControls>
          </TitleBar>
          <Panes>
            <Pane $divided>
              <SensorTable items={leftSensors} />
            </Pane>
            <Pane>
              <SensorTable items={rightSensors} />
            </Pane>
          </Panes>
          <Toolbar>
            <ToolGroup $gap={2}>
              <ToolButton type="button" aria-label="Expand columns"><ExpandArrows /></ToolButton>
              <ToolButton type="button" aria-label="Shrink columns"><CollapseArrows /></ToolButton>
            </ToolGroup>
            <ToolGroup $gap={5}>
              <ToolGroup $gap={13}>
                <ToolButton type="button" aria-label="System summary"><MonitorSearchIcon /></ToolButton>
                <ToolButton type="button" aria-label="Remote monitoring"><NetworkIcon /></ToolButton>
              </ToolGroup>
              <Elapsed>0:10:24</Elapsed>
              <ToolButton type="button" aria-label="Reset timer"><ClockIcon /></ToolButton>
              <ToolButton type="button" aria-label="Start logging"><LogFileIcon /></ToolButton>
              <ToolButton type="button" aria-label="Settings"><GearIcon /></ToolButton>
              <ToolButton type="button" aria-label="Close sensors"><CrossIcon /></ToolButton>
            </ToolGroup>
          </Toolbar>
        </MainWindow>
        <GraphColumn>
          {graphs.map((graph) => (
            <GraphWindow key={graph.title} graph={graph} />
          ))}
        </GraphColumn>
      </Desktop>
    </>
  );
}
